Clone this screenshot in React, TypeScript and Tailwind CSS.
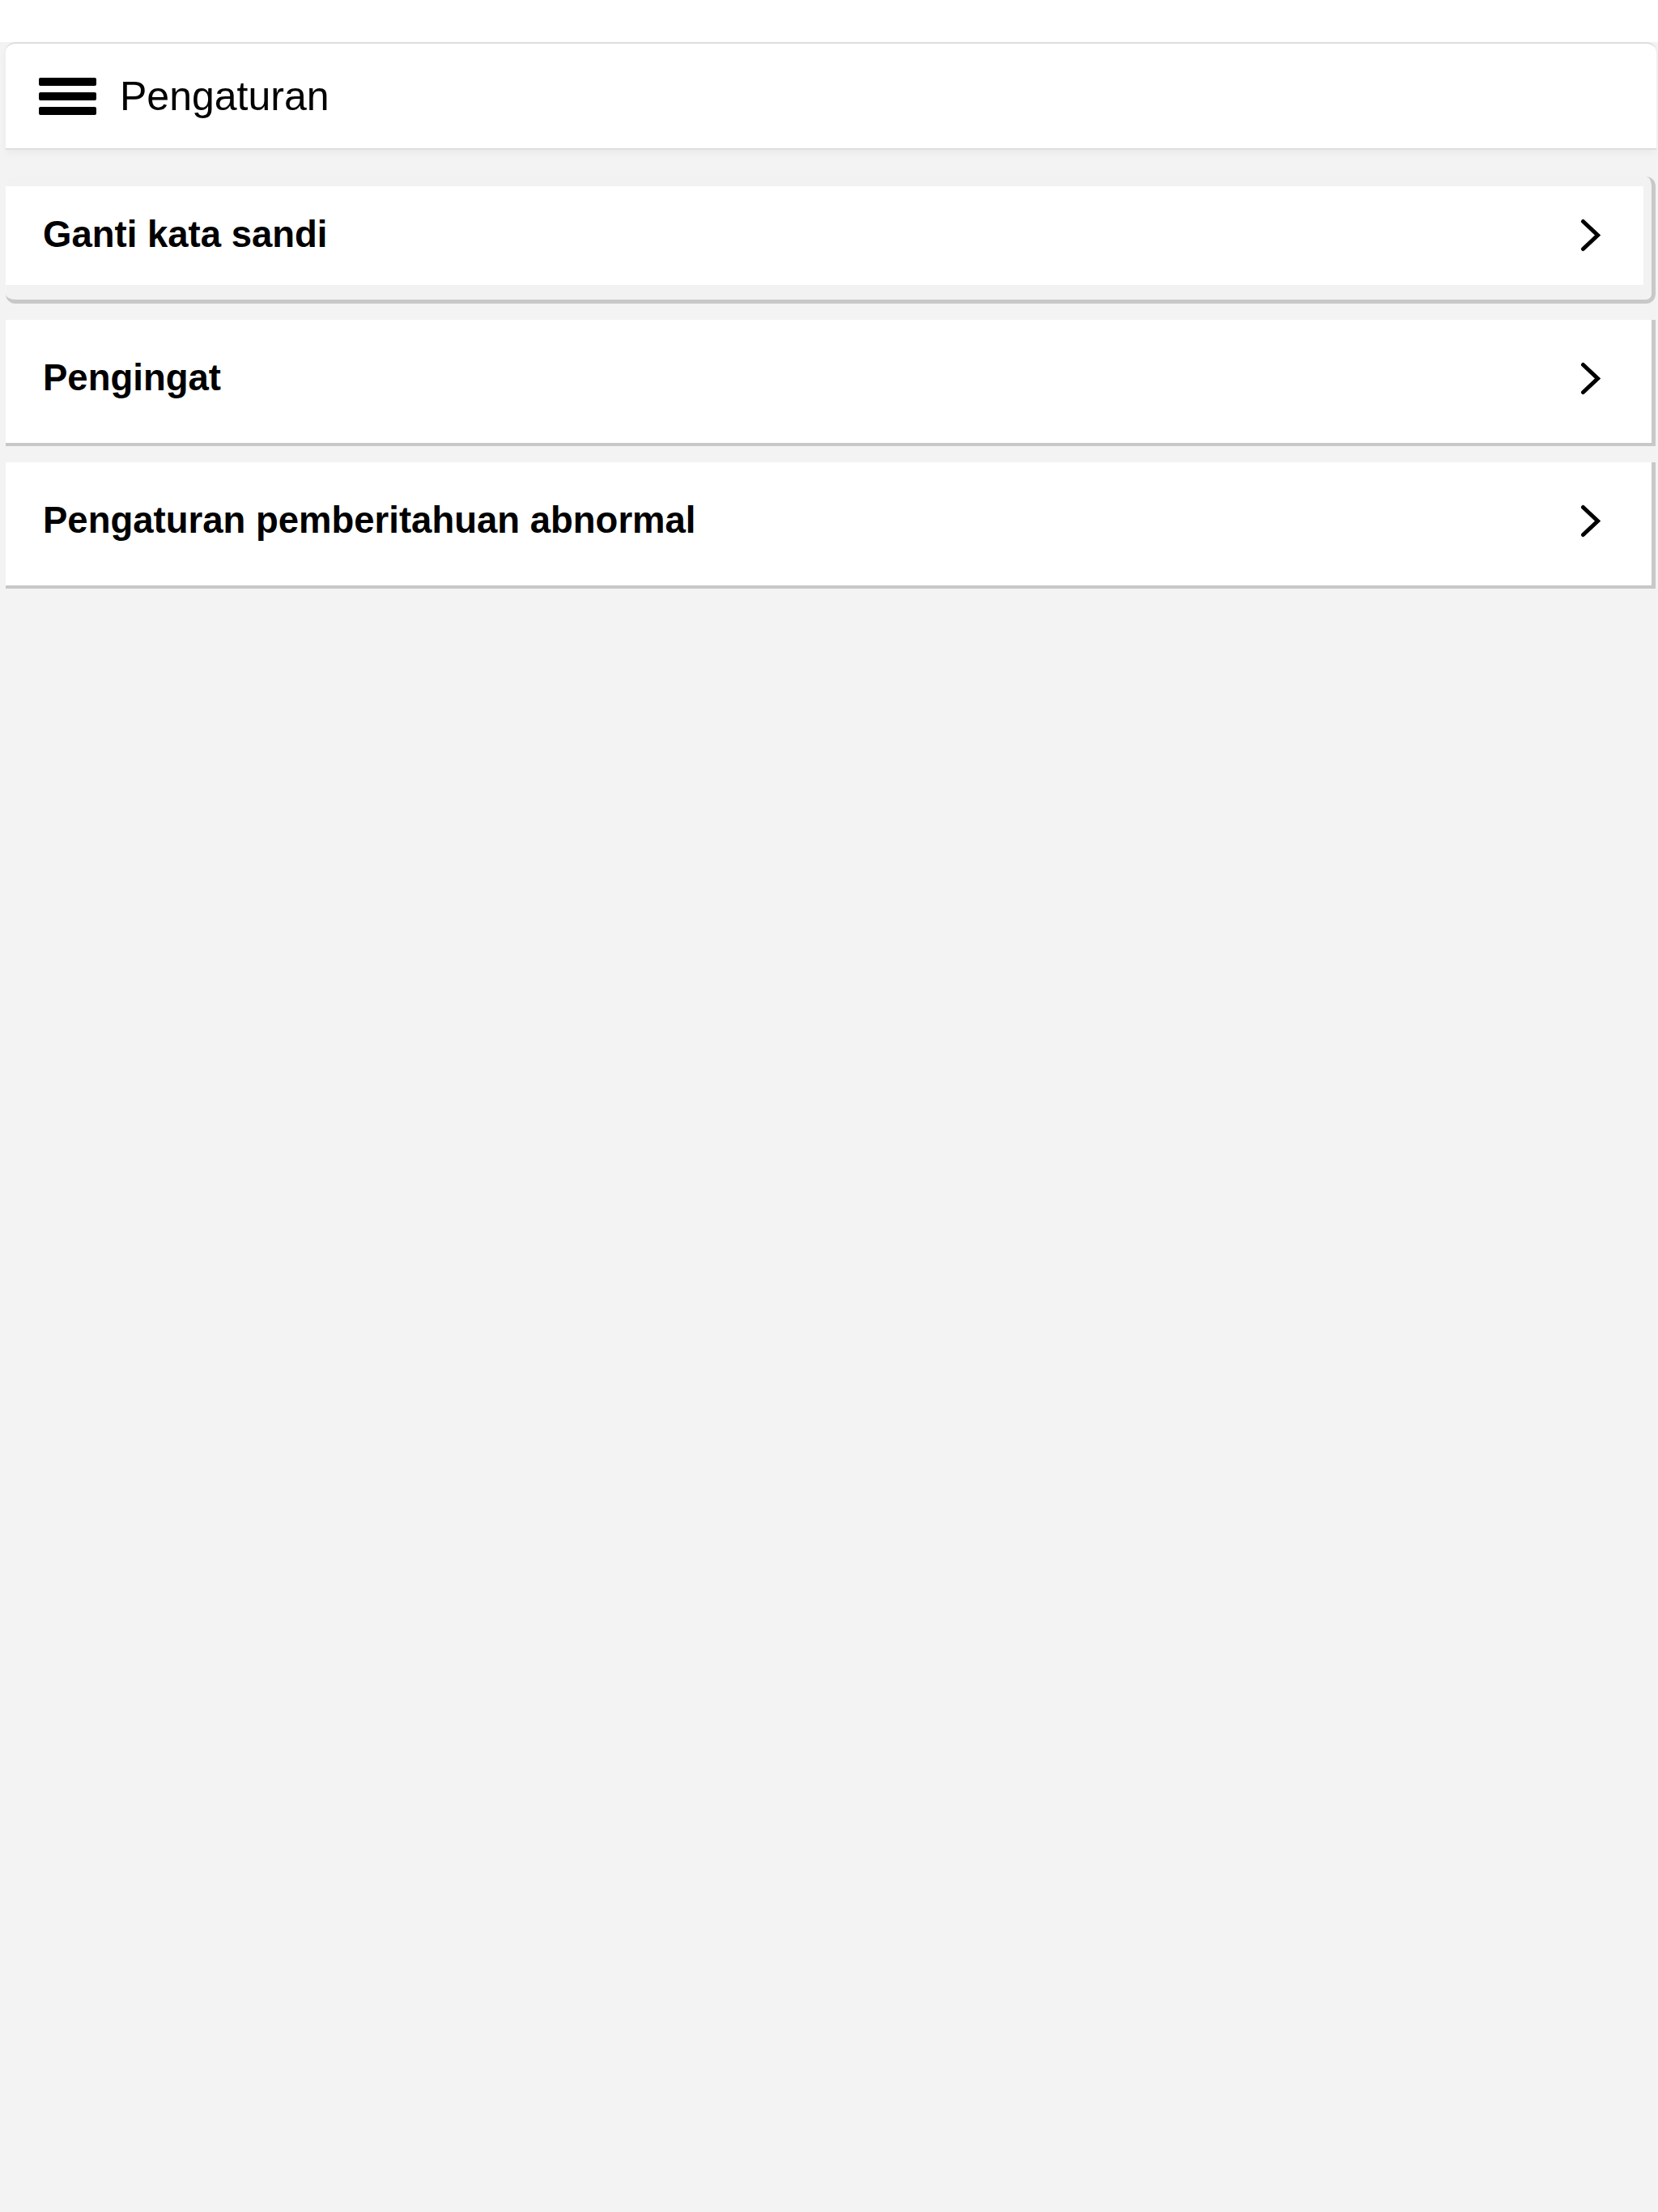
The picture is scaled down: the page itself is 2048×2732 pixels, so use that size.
const items = [
    { label: 'Ganti kata sandi', active: true },
    { label: 'Pengingat', active: false },
    { label: 'Pengaturan pemberitahuan abnormal', active: false },
]

const Chevron = () => (
    <svg width="25" height="41" viewBox="0 0 25 41" fill="none" className="shrink-0">
        <path d="M3.5 3.5 L21.5 20.5 L3.5 37.5" stroke="#000" strokeWidth="5" strokeLinecap="round" strokeLinejoin="miter" />
    </svg>
)

const Hamburger = () => (
    <div className="flex flex-col gap-[8px] w-[71px]">
        <div className="h-[10px] w-full bg-black rounded-[2px]" />
        <div className="h-[10px] w-full bg-black rounded-[2px]" />
        <div className="h-[10px] w-full bg-black rounded-[2px]" />
    </div>
)

export default function App() {
    return (
        <div className="min-h-screen bg-[#f3f3f3] font-['Liberation_Sans',Arial,sans-serif] text-black">
            <div className="h-[52px] bg-white" />
            <div className="pl-[7px] pr-[2px]">
                <div className="h-[133px] bg-white border-y-2 border-[#dedede] rounded-tl-[12px] rounded-tr-[12px] flex items-center pl-[41px] gap-[29px] shadow-[0_4px_10px_rgba(0,0,0,0.04)]">
                    <Hamburger />
                    <div className="text-[50px] leading-none">Pengaturan</div>
                </div>
            </div>

            <div className="pl-[7px] pr-[3px] pt-[33px] flex flex-col gap-[20px]">
                {items.map((item) =>
                    item.active ? (
                        <div key={item.label} className="bg-[#f2f2f2] rounded-[12px] border-r-[5px] border-b-[5px] border-[#c8c8c8] pt-[12px] pb-[18px]">
                            <div className="h-[122px] bg-white mr-[10px] flex items-center justify-between pl-[46px] pr-[53px] pb-[2px]">
                                <div className="text-[45.5px] font-bold leading-none">{item.label}</div>
                                <Chevron />
                            </div>
                        </div>
                    ) : (
                        <div key={item.label} className="h-[156px] bg-white border-r-[5px] border-b-[4px] border-[#c8c8c8] flex items-center justify-between pl-[46px] pr-[63px] pb-[8px]">
                            <div className="text-[45.5px] font-bold leading-none">{item.label}</div>
                            <Chevron />
                        </div>
                    )
                )}
            </div>
        </div>
    );
}
